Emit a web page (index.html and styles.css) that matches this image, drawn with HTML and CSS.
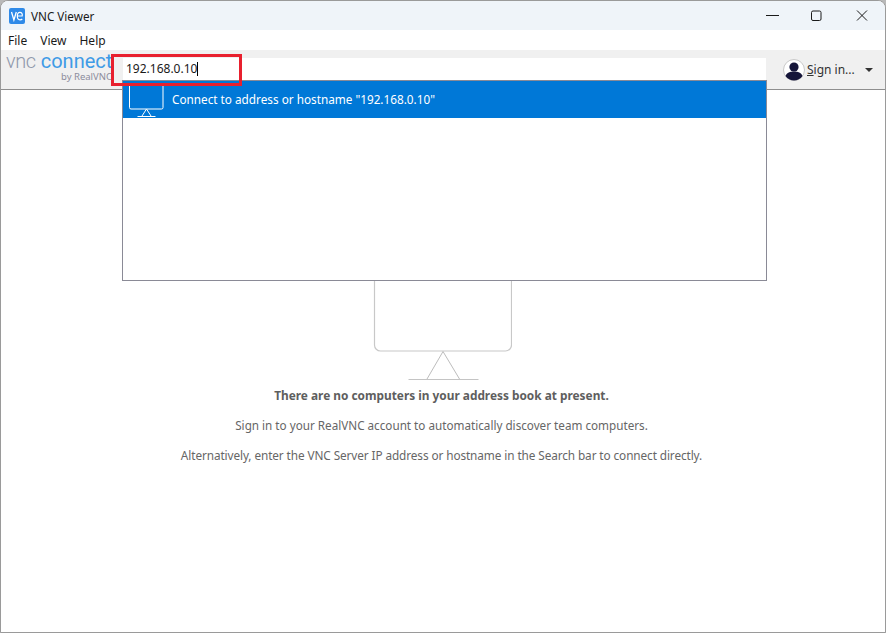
FILE: index.html
```html
<!DOCTYPE html>
<html lang="en">
<head>
<meta charset="utf-8">
<title>VNC Viewer</title>
<link rel="stylesheet" href="styles.css">
</head>
<body>
<div class="window">
  <header class="titlebar">
    <svg class="app-icon" width="16" height="16" viewBox="0 0 16 16">
      <rect width="16" height="16" rx="2" fill="#2f8ae8"/>
      <path d="M2.500 4l2.400 8L7.300 4" fill="none" stroke="#fff" stroke-width="1.300"/>
      <path d="M8.500 8h4.700c.5-2.200-.6-3.600-2.300-3.600S8.300 5.600 8.300 8s1 3.800 2.700 3.800c1 0 1.800-.3 2.300-.8" fill="none" stroke="#fff" stroke-width="1.200"/>
    </svg>
    <span class="app-title">VNC Viewer</span>
    <div class="win-controls">
      <svg width="46" height="30" viewBox="0 0 46 30"><path d="M19 14.500h13" stroke="#1a1a1a" stroke-width="1"/></svg>
      <svg width="46" height="30" viewBox="0 0 46 30"><rect x="18.500" y="10" width="9.500" height="9.500" rx="1.500" fill="none" stroke="#1a1a1a" stroke-width="1"/></svg>
      <svg width="46" height="30" viewBox="0 0 46 30"><path d="M18 9.500l10 10M28 9.500l-10 10" stroke="#1a1a1a" stroke-width="1"/></svg>
    </div>
  </header>
  <nav class="menubar">
    <span>File</span><span>View</span><span>Help</span>
  </nav>
  <div class="toolbar">
    <div class="logo">
      <div class="logo-main"><span class="logo-vnc">vnc</span><span class="logo-connect">connect</span></div>
      <div class="logo-by">by RealVNC</div>
    </div>
    <div class="search"><span class="search-text">192.168.0.10</span><i class="caret"></i></div>
    <div class="account">
      <svg width="22" height="22" viewBox="0 0 22 22">
        <circle cx="11" cy="11" r="10.500" fill="#fff" stroke="#c8c8c8"/>
        <circle cx="11" cy="8" r="4.600" fill="#16163a"/>
        <path d="M2.500 17c1.500-3.500 4.500-4.500 8.500-4.500s7 1 8.500 4.500c-2 2.800-5 4.500-8.500 4.500s-6.500-1.700-8.500-4.500z" fill="#16163a"/>
      </svg>
      <span class="sign-in"><u>S</u>ign in...</span>
      <i class="arrow"></i>
    </div>
  </div>
  <main class="content">
    <svg class="monitor" width="140" height="150" viewBox="0 0 140 150">
      <path d="M2.500 0v114a6 6 0 0 0 6 6h125a6 6 0 0 0 6-6V0" fill="none" stroke="#c8c8c8" stroke-width="1.200"/>
      <path d="M55 148L71 120.500 87.500 148" fill="none" stroke="#bdbdbd" stroke-width="1"/>
      <path d="M36.500 148.500h70" stroke="#c4c4c4" stroke-width="1"/>
    </svg>
    <p class="empty-title">There are no computers in your address book at present.</p>
    <p class="empty-text">Sign in to your RealVNC account to automatically discover team computers.</p>
    <p class="empty-text empty-alt">Alternatively, enter the VNC Server IP address or hostname in the Search bar to connect directly.</p>
  </main>
  <div class="dropdown">
    <div class="option">
      <svg class="option-icon" width="38" height="37" viewBox="0 0 38 37">
        <path d="M2.500 4.500h33.500v22a1.500 1.500 0 0 1-1.500 1.500H4a1.500 1.500 0 0 1-1.500-1.500z" fill="none" stroke="#fff" stroke-width="1"/>
        <path d="M15 35L19.500 28l4.500 7M10.500 35.500h18" fill="none" stroke="#fff" stroke-width="1"/>
      </svg>
      <span class="option-label">Connect to address or hostname "192.168.0.10"</span>
    </div>
  </div>
  <div class="highlight"></div>
</div>
</body>
</html>
```
FILE: styles.css
```css
* { box-sizing: border-box; }
html, body { margin: 0; height: 100%; background: #b9b9b9; }
body { font-family: "Noto Sans", "Open Sans", sans-serif; font-size: 12px; color: #1a1a1a; overflow: hidden; }
.window { position: relative; width: 886px; height: 633px; background: #fff; border: 1px solid #9a9a9a; border-radius: 8px 8px 0 0; overflow: hidden; display: flex; flex-direction: column; }
.titlebar { height: 29px; flex: none; background: #eff4f9; display: flex; align-items: center; padding-left: 8px; }
.app-icon { flex: none; }
.app-title { margin-left: 6px; font-size: 11.700px; }
.win-controls { margin-left: auto; display: flex; }
.menubar { height: 20px; flex: none; background: #fff; display: flex; gap: 13px; padding-left: 7px; align-items: center; }
.toolbar { height: 40px; flex: none; background: #f0f0f0; border-bottom: 1px solid #8e8e8e; display: flex; align-items: flex-start; }
.logo { width: 110px; flex: none; overflow: hidden; white-space: nowrap; padding: 0 0 0 5px; margin-right: 12px; }
.logo-main { font-family: "Roboto", sans-serif; font-size: 20px; line-height: 22px; }
.logo-vnc { color: #8f98ab; font-weight: 300; letter-spacing: -.4px; margin-right: 5px; }
.logo-connect { color: #3f9be6; }
.logo-by { font-size: 9.500px; line-height: 11px; color: #8c8c9c; margin: -1px 0 0 55px; }
.search { width: 643px; height: 22px; margin-top: 8px; flex: none; background: #fff; padding-left: 3px; display: flex; align-items: center; }
.search-text { line-height: 20px; }
.caret { width: 1px; height: 14px; background: #000; }
.account { display: flex; align-items: center; margin: 9px 0 0 17px; }
.sign-in { margin: -1px 0 0 2px; color: #333; white-space: nowrap; }
.arrow { margin-left: 10px; border: 4px solid transparent; border-top-color: #333; border-bottom-width: 0; }
.content { flex: 1; display: flex; flex-direction: column; align-items: center; padding: 141px 3px 0 0; text-align: center; color: #666; }
.monitor { flex: none; margin-bottom: 6px; }
.content p { margin: 0; line-height: 16px; }
.empty-title { font-weight: 700; color: #5e5e5e; font-size: 11.850px; margin-bottom: 14px !important; }
.empty-text { font-size: 11.700px; margin-bottom: 14px !important; }
.empty-alt { font-size: 11.800px; letter-spacing: -.1px; }
.dropdown { position: absolute; left: 121px; top: 79px; width: 645px; height: 201px; background: #fff; border: 1px solid #8a8a96; }
.option { height: 37px; background: #0078d7; color: #fff; display: flex; align-items: center; gap: 7px; padding-left: 4px; font-size: 11.750px; }
.option-icon { flex: none; }
.option-label { margin-top: -2px; }
.highlight { position: absolute; left: 110px; top: 53px; width: 131px; height: 32px; border: 3px solid #e8202e; }
```
